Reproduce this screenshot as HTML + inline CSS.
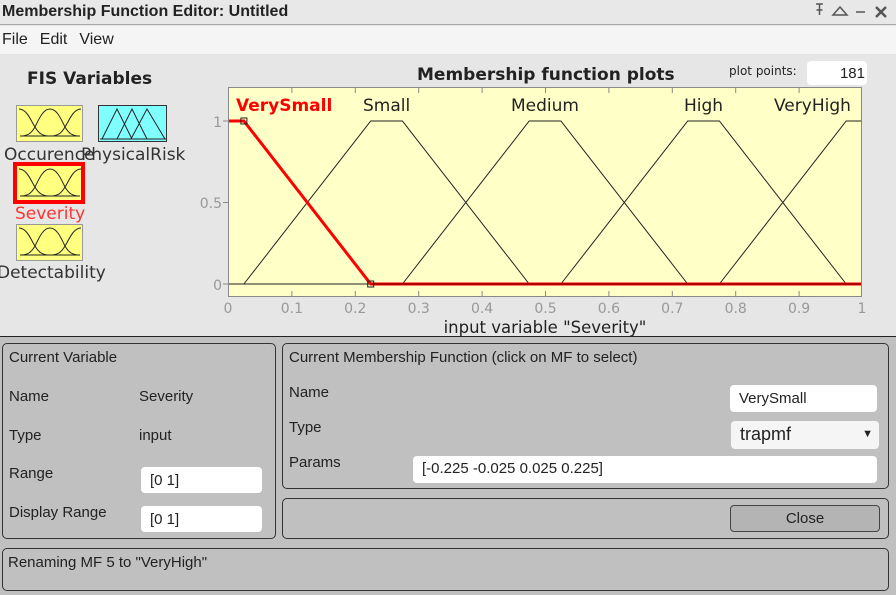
<!DOCTYPE html>
<html><head><meta charset="utf-8"><style>
*{margin:0;padding:0;box-sizing:border-box}
body{width:896px;height:595px;overflow:hidden;background:#e6e6e6;font-family:"Liberation Sans",Arial,sans-serif;position:relative}
.abs{position:absolute}
.title{left:0;top:0;width:896px;height:25px;background:#e8e8e8;border-bottom:1px solid #a8a8a8;font:bold 16px "Liberation Sans",sans-serif;color:#222;padding:3px 0 0 2px}
.menu{left:0;top:26px;width:896px;height:28px;background:#f5f5f5;font:16px "Liberation Sans",sans-serif;color:#222;padding:5px 0 0 2px}
.menu span{margin-right:12px}
.lower{left:0;top:336px;width:896px;height:259px;background:#c0c0c0;border-top:1px solid #222}
.panel{position:absolute;border:1px solid #333;border-radius:5px;background:#c0c0c0}
.t{position:absolute;font-size:15px;color:#222}
.inp{position:absolute;background:#fff;border-radius:4px;font-size:15px;color:#222;padding:0 0 0 9px}
.dv{font-family:"DejaVu Sans",sans-serif}
</style></head><body>
<div class="abs title">Membership Function Editor: Untitled</div>
<svg class="abs" style="left:810px;top:0" width="86" height="24">
<g fill="none" stroke="#555" stroke-width="1.5">
<path d="M6 4H13M9.5 4V15M6.5 10H12.5"/>
<path d="M23 15L30 7L37 15Z"/>
<path d="M46 12H55"/>
<path d="M66 7L76 17M76 7L66 17" stroke-width="2.5"/>
</g>
</svg>
<div class="abs menu"><span>File</span><span>Edit</span><span>View</span></div>
<div class="abs dv" style="left:27px;top:69px;font-size:17px;font-weight:bold;color:#222">FIS Variables</div>

<svg class="abs" style="left:0;top:95px" width="200" height="190" viewBox="0 95 200 190">
<defs>
<g id="bells" fill="none" stroke="#222" stroke-width="1">
<path d="M2 2 C10 2 14 14 18 20 C22 27 26 29 33 29"/>
<path d="M3 29 C10 29 14 27 18 20 C22 12 26 2 33 2 C40 2 44 12 48 20 C52 27 56 29 63 29"/>
<path d="M33 29 C40 29 44 27 48 20 C52 14 56 2 64 2"/>
<path d="M3 29 H63"/>
</g>
</defs>
<rect x="16.5" y="105.5" width="66" height="36" fill="#ffff80" stroke="#999"/>
<use href="#bells" x="17" y="107"/>
<rect x="98.5" y="105.5" width="68" height="36" fill="#80ffff" stroke="#333"/>
<g fill="none" stroke="#222" stroke-width="1"><path d="M102 139 L117 109 L132 139 M117 139 L132 109 L147 139 M131 139 L147 109 L165 139 M100 139 H166"/></g>
<rect x="15" y="164" width="68" height="38" fill="#ffff80" stroke="#f00" stroke-width="4"/>
<use href="#bells" x="17" y="167"/>
<rect x="16.5" y="224.5" width="66" height="36" fill="#ffff80" stroke="#999"/>
<use href="#bells" x="17" y="226"/>
</svg>
<div class="abs dv" style="left:4px;top:145px;font-size:17px;color:#333">Occurence</div>
<div class="abs dv" style="left:81px;top:145px;font-size:17px;color:#333">PhysicalRisk</div>
<div class="abs dv" style="left:15px;top:204px;font-size:17px;color:#f33">Severity</div>
<div class="abs dv" style="left:-3px;top:263px;font-size:17px;color:#333">Detectability</div>

<div class="abs dv" style="left:417px;top:65px;font-size:17px;font-weight:bold;color:#222">Membership function plots</div>
<div class="abs dv" style="left:729px;top:64px;font-size:12px;color:#222">plot points:</div>
<div class="abs" style="left:807px;top:61px;width:60px;height:24px;background:#fff;border-radius:4px;font-size:15px;text-align:right;padding:4px 2px 0 0;color:#222">181</div>

<svg class="abs" style="left:0;top:0" width="896" height="340">
<rect x="228.5" y="87.5" width="633" height="209" fill="#ffffc8" stroke="#888"/>
<g stroke="#888" stroke-width="1">
<path d="M291.9 88v5M355.3 88v5M418.7 88v5M482.1 88v5M545.5 88v5M608.9 88v5M672.3 88v5M735.7 88v5M799.1 88v5"/>
<path d="M291.9 296v-5M355.3 296v-5M418.7 296v-5M482.1 296v-5M545.5 296v-5M608.9 296v-5M672.3 296v-5M735.7 296v-5M799.1 296v-5"/>
<path d="M223 121h5M223 202.5h5M223 284h5"/>
</g>
<g fill="#999" font-family="DejaVu Sans,sans-serif" font-size="14" text-anchor="end">
<text x="222" y="127">1</text><text x="222" y="208">0.5</text><text x="222" y="290">0</text>
</g>
<g fill="#999" font-family="DejaVu Sans,sans-serif" font-size="14" text-anchor="middle">
<text x="228" y="313">0</text><text x="291.9" y="313">0.1</text><text x="355.3" y="313">0.2</text><text x="418.7" y="313">0.3</text><text x="482.1" y="313">0.4</text><text x="545.5" y="313">0.5</text><text x="608.9" y="313">0.6</text><text x="672.3" y="313">0.7</text><text x="735.7" y="313">0.8</text><text x="799.1" y="313">0.9</text><text x="862" y="313">1</text>
</g>
<text x="545" y="333" fill="#222" font-family="DejaVu Sans,sans-serif" font-size="16.5" text-anchor="middle">input variable "Severity"</text>
<g fill="none" stroke="#222" stroke-width="1">
<path d="M229 284H861"/>
<path d="M243.9 284L370.7 121H402.4L529.2 284"/>
<path d="M402.4 284L529.2 121H560.9L687.7 284"/>
<path d="M560.9 284L687.7 121H719.4L846.2 284"/>
<path d="M719.4 284L846.2 121H861"/>
</g>
<path d="M229 121H243.9L370.7 284H861" fill="none" stroke="#f00" stroke-width="3"/>
<path d="M371 284H861" stroke="#600" stroke-width="1"/>
<rect x="240.9" y="118" width="6" height="6" fill="none" stroke="#222"/>
<rect x="367.7" y="281" width="6" height="6" fill="none" stroke="#222"/>
<g font-family="DejaVu Sans,sans-serif" font-size="17">
<text x="236" y="111" fill="#f00" font-weight="bold">VerySmall</text>
<text x="363" y="111" fill="#222">Small</text>
<text x="511" y="111" fill="#222">Medium</text>
<text x="684" y="111" fill="#222">High</text>
<text x="774" y="111" fill="#222">VeryHigh</text>
</g>
</svg>

<div class="abs lower"></div>
<div class="panel" style="left:2px;top:343px;width:274px;height:196px"></div>
<div class="t" style="left:9px;top:349px">Current Variable</div>
<div class="t" style="left:9px;top:388px">Name</div>
<div class="t" style="left:139px;top:388px">Severity</div>
<div class="t" style="left:9px;top:427px">Type</div>
<div class="t" style="left:139px;top:427px">input</div>
<div class="t" style="left:9px;top:465px">Range</div>
<div class="inp" style="left:141px;top:467px;width:121px;height:26px;padding-top:5px">[0 1]</div>
<div class="t" style="left:9px;top:504px">Display Range</div>
<div class="inp" style="left:141px;top:506px;width:121px;height:26px;padding-top:5px">[0 1]</div>

<div class="panel" style="left:282px;top:343px;width:607px;height:146px"></div>
<div class="t" style="left:289px;top:349px">Current Membership Function (click on MF to select)</div>
<div class="t" style="left:289px;top:384px">Name</div>
<div class="t" style="left:289px;top:419px">Type</div>
<div class="t" style="left:289px;top:454px">Params</div>
<div class="inp" style="left:730px;top:385px;width:147px;height:27px;padding-top:5px">VerySmall</div>
<div class="inp" style="left:731px;top:421px;width:148px;height:28px;padding-top:3px;font-size:18px;background:#f5f5f5">trapmf<span style="position:absolute;right:6px;top:7px;font-size:11px">▼</span></div>
<div class="inp" style="left:413px;top:456px;width:464px;height:27px;padding-top:4px">[-0.225 -0.025 0.025 0.225]</div>

<div class="panel" style="left:282px;top:498px;width:607px;height:41px"></div>
<div class="abs" style="left:730px;top:505px;width:150px;height:27px;border:1px solid #444;border-radius:4px;background:#b4b4b4;text-align:center;font-size:15px;padding-top:4px;color:#222">Close</div>

<div class="panel" style="left:2px;top:548px;width:887px;height:43px"></div>
<div class="t" style="left:8px;top:554px">Renaming MF 5 to "VeryHigh"</div>
</body></html>
